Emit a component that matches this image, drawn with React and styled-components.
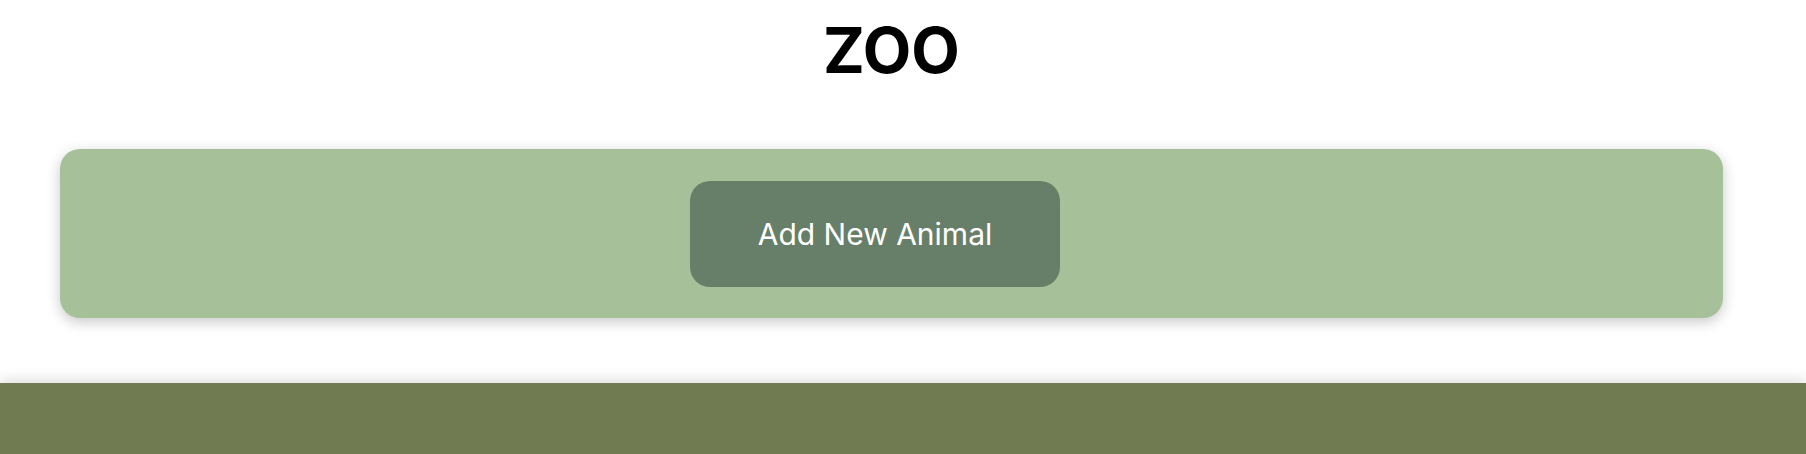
import React from 'react';
import styled, { createGlobalStyle } from 'styled-components';

const GlobalStyle = createGlobalStyle`
  body {
    margin: 0;
    background: #ffffff;
    font-family: "Inter", "Liberation Sans", sans-serif;
    overflow: hidden;
  }
`;

export default function App() {
  return (
    <>
      <GlobalStyle />
      <Page>
        <Main>
          <Title>ZOO</Title>
          <Card>
            <AddButton type="button">Add New Animal</AddButton>
          </Card>
        </Main>
        <Footer />
      </Page>
    </>
  );
}

const Page = styled.div`
  display: flex;
  flex-direction: column;
  min-height: 100vh;
`;

const Main = styled.main`
  width: 1663px;
  margin-left: 60px;
  padding-top: 15px;
`;

const Title = styled.h1`
  margin: 0;
  text-align: center;
  font-family: "Inter", "Liberation Sans", sans-serif;
  font-weight: 700;
  font-size: 63px;
  line-height: 70px;
  color: #000;
`;

const Card = styled.section`
  margin-top: 64px;
  height: 169px;
  box-sizing: border-box;
  display: flex;
  align-items: center;
  justify-content: center;
  padding-right: 33px;
  background: #a6c199;
  border-radius: 20px;
  box-shadow: 0 4px 14px rgba(0, 0, 0, 0.22);
`;

const AddButton = styled.button`
  width: 370px;
  height: 106px;
  border: none;
  border-radius: 20px;
  background: #677f68;
  color: #ffffff;
  font-family: "Inter", "Liberation Sans", sans-serif;
  font-weight: 400;
  font-size: 30px;
  cursor: pointer;
`;

const Footer = styled.footer`
  margin-top: 65px;
  flex: 1;
  background: #717b51;
  box-shadow: 0 -4px 12px rgba(0, 0, 0, 0.12);
`;
